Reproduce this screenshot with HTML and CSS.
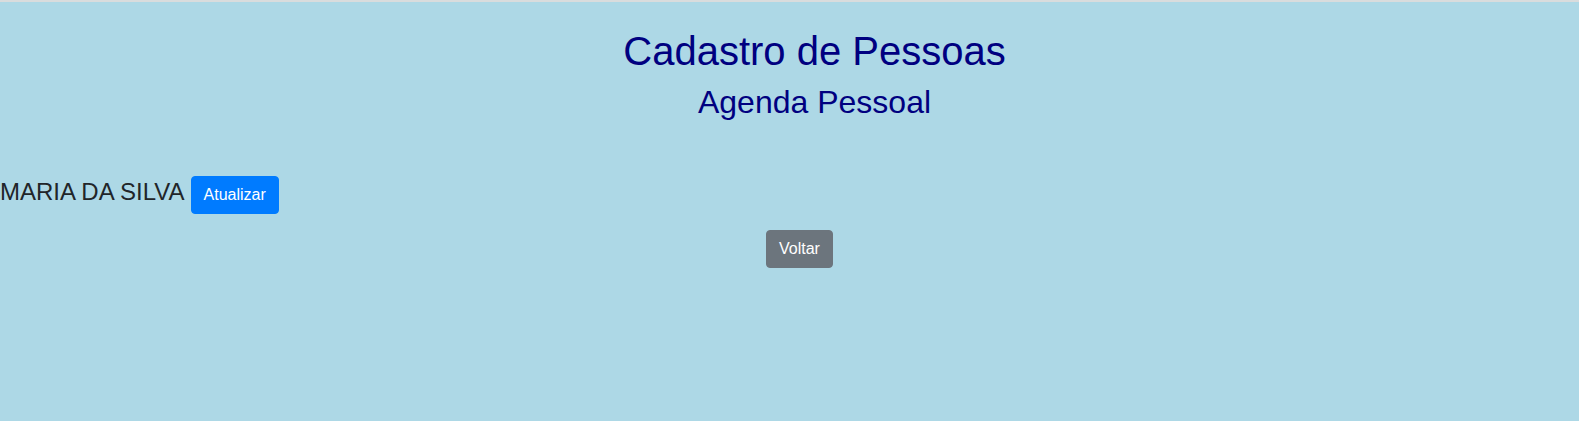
FILE: index.html
```html
<!DOCTYPE html>
<html lang="pt-BR">
<head>
<meta charset="utf-8">
<title>Cadastro de Pessoas</title>
<link rel="stylesheet" href="styles.css">
</head>
<body>
<div class="topbar"></div>
<header class="header">
  <h1 class="title">Cadastro de Pessoas</h1>
  <h2 class="subtitle">Agenda Pessoal</h2>
</header>
<div class="person">
  <span class="person-name">MARIA DA SILVA</span>
  <button class="btn btn-primary" type="button">Atualizar</button>
</div>
<div class="actions">
  <button class="btn btn-secondary" type="button">Voltar</button>
</div>
</body>
</html>
```
FILE: styles.css
```css
html, body {
  height: 100%;
}
body {
  margin: 0;
  background: #add8e6;
  font-family: "Liberation Sans", Arial, sans-serif;
  color: #212529;
  font-size: 16px;
  line-height: 1.5;
}
.topbar {
  height: 2px;
  background: #d9dcdd;
}
.header {
  padding-top: 25px;
  padding-left: 50px;
  text-align: center;
  color: #000080;
}
.title {
  margin: 0 0 8px;
  font-size: 40px;
  font-weight: 400;
  line-height: 1.2;
}
.subtitle {
  margin: 0 0 8px;
  font-size: 32px;
  font-weight: 400;
  line-height: 1.2;
}
.person {
  margin-top: 53px;
  display: flex;
  align-items: baseline;
  gap: 6px;
}
.person-name {
  font-size: 24px;
}
.btn {
  font-family: inherit;
  font-size: 16px;
  line-height: 1.5;
  padding: 6px 12px;
  border: 1px solid transparent;
  border-radius: 4px;
  color: #fff;
  cursor: pointer;
}
.btn-primary {
  background: #007bff;
  border-color: #007bff;
}
.btn-secondary {
  background: #6c757d;
  border-color: #6c757d;
}
.actions {
  margin-top: 16px;
  padding-left: 20px;
  text-align: center;
}
```
